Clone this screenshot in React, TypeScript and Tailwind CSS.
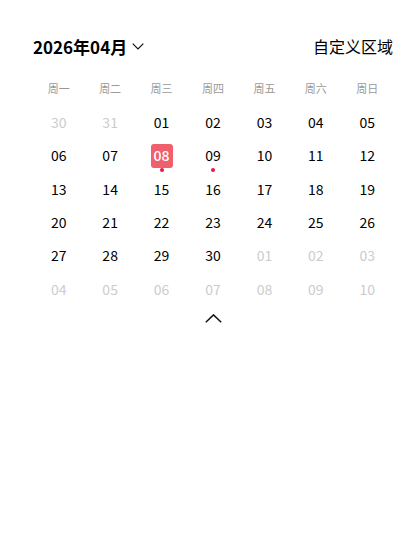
const weekdays = ['周一', '周二', '周三', '周四', '周五', '周六', '周日'];

type Day = { label: string; muted?: boolean; selected?: boolean; dot?: boolean };

const buildDays = (): Day[] => {
  const days: Day[] = [{ label: '30', muted: true }, { label: '31', muted: true }];
  for (let d = 1; d <= 30; d++) {
    const label = String(d).padStart(2, '0');
    days.push({ label, selected: d === 8, dot: d === 8 || d === 9 });
  }
  for (let d = 1; d <= 10; d++) {
    days.push({ label: String(d).padStart(2, '0'), muted: true });
  }
  return days;
};

export default function App() {
  const days = buildDays();

  return (
    <div
      className="min-h-screen bg-white text-black"
      style={{ fontFamily: '"Noto Sans CJK SC", "Noto Sans", sans-serif' }}
    >
      <div className="pl-[33px] pr-[2px] pt-[33px]">
        {/* Header */}
        <div className="flex items-center justify-between h-[26px]">
          <div className="flex items-center">
            <span className="text-[17px] font-bold leading-none">2026年04月</span>
            <svg className="ml-[5px] mt-[1px]" width="12" height="7" viewBox="0 0 12 7" fill="none">
              <polyline points="0.7,0.7 6,6 11.3,0.7" stroke="#111" strokeWidth="1.2" />
            </svg>
          </div>
          <span className="text-[16px] leading-none">自定义区域</span>
        </div>

        {/* Weekdays */}
        <div className="grid grid-cols-7 mt-[19px]">
          {weekdays.map((w) => (
            <div key={w} className="text-center text-[11px] leading-[20px] text-[#9a9a9a]">
              {w}
            </div>
          ))}
        </div>

        {/* Days */}
        <div className="grid grid-cols-7 mt-[8px]">
          {days.map((day, i) => (
            <div key={i} className="relative h-[33.3px] flex items-center justify-center">
              {day.selected ? (
                <span className="w-[22px] h-[24px] rounded-[3px] bg-[#f0606c] text-white text-[14px] font-medium flex items-center justify-center">
                  {day.label}
                </span>
              ) : (
                <span className={`text-[14px] ${day.muted ? 'text-[#cccccc]' : 'text-black'}`}>{day.label}</span>
              )}
              {day.dot && (
                <span className="absolute left-1/2 -translate-x-1/2 top-[29px] w-[4px] h-[4px] rounded-full bg-[#e8194a]" />
              )}
            </div>
          ))}
        </div>

        <div className="flex justify-center mt-[8px]">
          <svg width="17" height="9" viewBox="0 0 17 9" fill="none">
            <polyline points="0.8,8.3 8.5,0.9 16.2,8.3" stroke="#111" strokeWidth="1.5" />
          </svg>
        </div>
      </div>
    </div>
  );
}
